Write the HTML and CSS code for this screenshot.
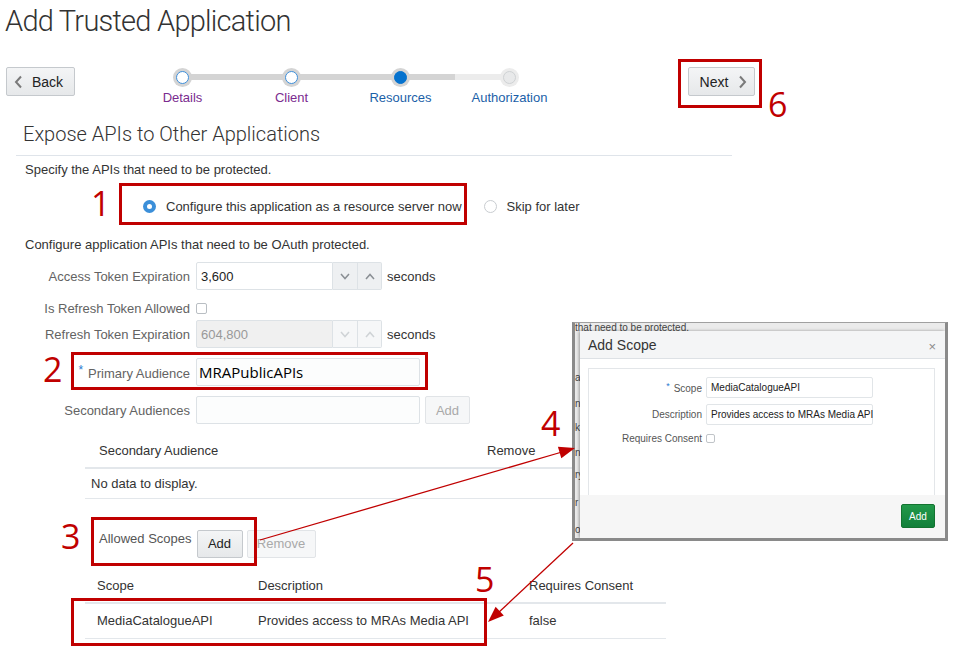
FILE: index.html
```html
<!DOCTYPE html>
<html>
<head>
<meta charset="utf-8">
<title>Add Trusted Application</title>
<link rel="stylesheet" href="styles.css">
</head>
<body>
<div class="page">
  <h1 class="title">Add Trusted Application</h1>

  <div class="topbar">
    <button class="btn back"><svg class="chev" width="9" height="14" viewBox="0 0 9 14"><polyline points="7,1.5 2,7 7,12.5" fill="none" stroke="#7a7a7a" stroke-width="2"/></svg>Back</button>
    <div class="train">
      <div class="step visited"><span class="dot"><span class="core"></span></span><span class="slabel">Details</span></div>
      <div class="step visited"><span class="dot"><span class="core"></span></span><span class="slabel">Client</span></div>
      <div class="step current"><span class="dot"><span class="core"></span></span><span class="slabel">Resources</span></div>
      <div class="step todo"><span class="dot"><span class="core"></span></span><span class="slabel">Authorization</span></div>
    </div>
    <button class="btn next">Next<svg class="chev" width="9" height="14" viewBox="0 0 9 14"><polyline points="2,1.5 7,7 2,12.5" fill="none" stroke="#7a7a7a" stroke-width="2"/></svg></button>
  </div>

  <div class="section">
    <h2 class="heading">Expose APIs to Other Applications</h2>
    <p class="intro">Specify the APIs that need to be protected.</p>
    <div class="radios">
      <span class="radio on"></span><span class="rtext">Configure this application as a resource server now</span>
      <span class="radio off"></span><span class="rtext">Skip for later</span>
    </div>
    <p class="intro second">Configure application APIs that need to be OAuth protected.</p>

    <div class="form">
      <div class="row">
        <span class="lbl">Access Token Expiration</span>
        <span class="input numin">3,600</span>
        <span class="spin"><svg width="10" height="7" viewBox="0 0 10 7"><polyline points="1,1 5,5.5 9,1" fill="none" stroke="#8a8f94" stroke-width="1.5"/></svg></span>
        <span class="spin up"><svg width="10" height="7" viewBox="0 0 10 7"><polyline points="1,6 5,1.5 9,6" fill="none" stroke="#8a8f94" stroke-width="1.5"/></svg></span>
        <span class="unit">seconds</span>
      </div>
      <div class="row check-row">
        <span class="lbl">Is Refresh Token Allowed</span>
        <span class="checkbox"></span>
      </div>
      <div class="row">
        <span class="lbl">Refresh Token Expiration</span>
        <span class="input numin disabled">604,800</span>
        <span class="spin disabled"><svg width="10" height="7" viewBox="0 0 10 7"><polyline points="1,1 5,5.5 9,1" fill="none" stroke="#cfd3d6" stroke-width="1.5"/></svg></span>
        <span class="spin up disabled"><svg width="10" height="7" viewBox="0 0 10 7"><polyline points="1,6 5,1.5 9,6" fill="none" stroke="#cfd3d6" stroke-width="1.5"/></svg></span>
        <span class="unit">seconds</span>
      </div>
      <div class="row">
        <span class="lbl"><span class="req">*</span>Primary Audience</span>
        <span class="input wide big">MRAPublicAPIs</span>
      </div>
      <div class="row">
        <span class="lbl">Secondary Audiences</span>
        <span class="input wide"></span>
        <button class="btn small disabled add2">Add</button>
      </div>
    </div>

    <table class="grid aud">
      <thead><tr><th class="c1">Secondary Audience</th><th>Remove</th></tr></thead>
      <tbody><tr><td colspan="2" class="empty">No data to display.</td></tr></tbody>
    </table>

    <div class="toolbar">
      <span class="tlabel">Allowed Scopes</span>
      <button class="btn small addbtn">Add</button>
      <button class="btn small disabled removebtn">Remove</button>
    </div>

    <table class="grid scopes">
      <thead><tr><th class="s1">Scope</th><th class="s2">Description</th><th>Requires Consent</th></tr></thead>
      <tbody><tr><td>MediaCatalogueAPI</td><td>Provides access to MRAs Media API</td><td>false</td></tr></tbody>
    </table>
  </div>

  <div class="inset">
    <span class="frag top">that need to be protected.</span>
    <span class="frag" style="top:50px">ati</span>
    <span class="frag" style="top:76px">n</span>
    <span class="frag" style="top:100px">ke</span>
    <span class="frag" style="top:125px">n</span>
    <span class="frag" style="top:147px">ry</span>
    <span class="frag" style="top:175px">r /</span>
    <span class="frag" style="top:202px">or</span>
    <div class="dialog">
      <div class="dhead"><span class="dtitle">Add Scope</span><span class="close">×</span></div>
      <div class="dbody">
        <div class="panel">
          <div class="drow"><span class="dlbl"><span class="req">*</span>Scope</span><span class="dinput">MediaCatalogueAPI</span></div>
          <div class="drow"><span class="dlbl">Description</span><span class="dinput">Provides access to MRAs Media API<span class="caret"></span></span></div>
          <div class="drow crow"><span class="dlbl">Requires Consent</span><span class="dcheck"></span></div>
        </div>
      </div>
      <div class="dfoot"><button class="gbtn">Add</button></div>
    </div>
  </div>

  <div class="anno box b1"></div>
  <div class="anno box b2"></div>
  <div class="anno box b3"></div>
  <div class="anno box b5"></div>
  <div class="anno box b6"></div>
  <span class="anno mark n1">1</span>
  <span class="anno mark n2">2</span>
  <span class="anno mark n3">3</span>
  <span class="anno mark n4">4</span>
  <span class="anno mark n5">5</span>
  <span class="anno mark n6">6</span>

  <svg class="arrows" width="964" height="664" viewBox="0 0 964 664">
    <line x1="260" y1="540" x2="562" y2="452" stroke="#c00000" stroke-width="1.3"/>
    <polygon points="575,448 561.3,458.3 557.9,446.7" fill="#c00000"/>
    <line x1="573" y1="543" x2="498" y2="613" stroke="#c00000" stroke-width="1.3"/>
    <polygon points="488,622 503.8,615.5 495.6,606.7" fill="#c00000"/>
  </svg>
</div>
</body>
</html>
```

FILE: styles.css
```css
* { box-sizing: border-box; }
body {
  margin: 0;
  background: #fff;
  font-family: "Liberation Sans", Arial, sans-serif;
  font-size: 13px;
  color: #333;
}
.page { position: relative; width: 964px; height: 664px; overflow: hidden; }

.title {
  margin: 0;
  padding: 4px 0 0 5px;
  font: 300 29px/34px Roboto, sans-serif;
  letter-spacing: -0.75px;
  color: #333;
}

/* buttons */
.btn {
  display: inline-flex;
  align-items: center;
  justify-content: center;
  height: 29px;
  margin: 0;
  border: 1px solid #c5c9cd;
  border-radius: 2px;
  background: linear-gradient(#f4f5f6, #e6e8ea);
  font: 14px "Liberation Sans", Arial, sans-serif;
  color: #222;
  padding: 0;
}
.btn .chev { display: block; }

.topbar {
  display: flex;
  align-items: flex-start;
  height: 38px;
  margin-top: 29px;
  padding-left: 6px;
}
.back { width: 69px; gap: 9px; padding-right: 4px; }
.next { width: 67px; gap: 10px; margin-left: 124px; padding-left: 4px; }

/* train */
.train {
  position: relative;
  display: flex;
  width: 436px;
  margin-left: 53px;
}
.train::before {
  content: "";
  position: absolute;
  left: 54px; top: 7px;
  width: 273px; height: 6px;
  background: #d4d4d4;
}
.train::after {
  content: "";
  position: absolute;
  left: 327px; top: 7px;
  width: 55px; height: 6px;
  background: #ececec;
}
.step {
  position: relative;
  z-index: 1;
  width: 109px;
  display: flex;
  flex-direction: column;
  align-items: center;
}
.dot {
  width: 19px; height: 19px;
  margin-top: 1px;
  border-radius: 50%;
  background: #d4d4d4;
  display: flex;
  align-items: center;
  justify-content: center;
}
.core {
  width: 13px; height: 13px;
  border-radius: 50%;
  background: #fff;
  border: 1.5px solid #3e8fda;
}
.current .core { background: #0572ce; border-color: #0572ce; }
.todo .dot { background: #ececec; }
.todo .core { background: #e8e9ea; border: 1px solid #cfd2d4; }
.slabel { margin-top: 3px; line-height: 16px; font-size: 13px; }
.visited .slabel { color: #7b2c8f; }
.current .slabel, .todo .slabel { color: #1b5fa8; }

/* section */
.section { margin-left: 16px; width: 716px; }
.heading {
  margin: 15px 0 0;
  padding: 0 0 7px 7px;
  font: 300 20px/28px Roboto, sans-serif;
  color: #333;
  border-bottom: 1px solid #dfe4ea;
}
.intro { margin: 6px 0 0 9px; line-height: 16px; color: #333; }
.intro.second { margin-top: 21px; }

.radios {
  display: flex;
  align-items: center;
  height: 20px;
  margin-top: 18px;
  padding-left: 127px;
}
.radio {
  width: 13px; height: 13px;
  border-radius: 50%;
  flex: none;
}
.radio.on {
  background: #3b8fd9;
  display: flex; align-items: center; justify-content: center;
}
.radio.on::after {
  content: "";
  width: 5px; height: 5px;
  border-radius: 50%;
  background: #fff;
}
.radio.off { border: 1px solid #c9cdd1; background: #fff; margin-left: 22px; }
.rtext { margin-left: 10px; color: #333; }

/* form */
.form { margin-top: 9px; display: flex; flex-direction: column; }
.row { display: flex; align-items: center; height: 28px; margin-top: 10px; }
.row:first-child { margin-top: 0; }
.row.check-row { height: 16px; }
.row.check-row + .row { margin-top: 4px; }
.lbl {
  width: 174px;
  margin-right: 6px;
  text-align: right;
  color: #636363;
  white-space: nowrap;
}
.req { color: #2a7ad0; font-size: 12px; vertical-align: 4px; margin-right: 5px; }
.input {
  height: 28px;
  border: 1px solid #dde2e6;
  border-radius: 2px;
  background: #fff;
  padding: 0 4px;
  display: flex;
  align-items: center;
  color: #222;
}
.input.numin { width: 137px; border-radius: 2px 0 0 2px; }
.input.disabled { background: #f0f0f0; color: #999; }
.input.wide { width: 224px; background: #fcfdfd; }
.input.big { font: 15px "Open Sans", "Noto Sans", sans-serif; color: #000; padding-left: 2px; }
.spin {
  width: 25px; height: 28px;
  border: 1px solid #dde2e6;
  border-left: none;
  background: #eef0f2;
  display: flex;
  align-items: center;
  justify-content: center;
}
.spin.up { width: 24px; border-radius: 0 2px 2px 0; }
.spin.disabled { background: #f6f7f8; }
.unit { margin-left: 5px; color: #333; }
.checkbox {
  width: 11px; height: 11px;
  border: 1px solid #b9bec3;
  border-radius: 2px;
  background: #fff;
}
.btn.small { height: 28px; font-size: 13px; }
.btn.disabled { background: #f6f7f8; border-color: #e1e4e7; color: #a9a9a9; }
.add2 { width: 45px; margin-left: 5px; }

/* tables */
.grid { border-collapse: collapse; margin-left: 69px; table-layout: fixed; }
.grid th {
  font-weight: normal;
  text-align: left;
  color: #333;
  height: 34px;
  padding: 0 0 0 12px;
  border-bottom: 2px solid #e3e7eb;
}
.grid td {
  padding: 0 0 0 12px;
  border-bottom: 1px solid #e3e7eb;
  color: #333;
}
.aud { width: 520px; margin-top: 10px; }
.aud th { padding-left: 14px; }
.aud .c1 { width: 388px; }
.aud td { height: 30px; }
.aud td.empty { padding-left: 6px; }

.toolbar { display: flex; align-items: flex-start; margin-top: 31px; padding-left: 83px; }
.tlabel { line-height: 16px; margin-top: 1px; margin-right: 5px; color: #555; }
.addbtn { width: 46px; }
.removebtn { width: 69px; margin-left: 4px; }

.scopes { width: 581px; margin-top: 11px; }
.scopes .s1 { width: 161px; }
.scopes .s2 { width: 271px; }
.scopes td { height: 36px; }

/* dialog inset (screenshot of the Add Scope dialog) */
.inset {
  position: absolute;
  left: 572px; top: 322px;
  width: 376px; height: 219px;
  background: #ebebeb;
  border: 3px solid #8a8a8a;
  border-top: 1px solid #a0a0a0;
  padding: 8px 0 0 5px;
  display: flex;
  overflow: hidden;
}
.frag {
  position: absolute;
  left: 0;
  font-size: 10px;
  line-height: 10px;
  color: #444;
  white-space: nowrap;
}
.frag.top { top: 0; left: 0; line-height: 9px; }
.dialog {
  position: relative;
  z-index: 1;
  flex: 1;
  display: flex;
  flex-direction: column;
  background: #fff;
  box-shadow: -1px 0 3px rgba(0,0,0,0.35);
}
.dhead {
  height: 28px;
  flex: none;
  display: flex;
  align-items: center;
  justify-content: space-between;
  padding: 0 9px 0 8px;
  background: #f4f5f6;
  border-bottom: 1px solid #dde1e5;
}
.dtitle { font: 14px "Liberation Sans", Arial, sans-serif; color: #333; }
.close { font-size: 13px; color: #8a8a8a; margin-top: 4px; }
.dbody { flex: 1; padding: 9px 10px 0 8px; display: flex; }
.panel {
  flex: 1;
  border: 1px solid #e3e6e9;
  border-bottom: none;
  padding-top: 8px;
}
.drow { display: flex; align-items: center; height: 21px; margin-bottom: 6px; }
.drow.crow { height: 14px; }
.dlbl {
  width: 113px;
  margin-right: 4px;
  text-align: right;
  font-size: 10px;
  color: #555;
  white-space: nowrap;
}
.dlbl .req { font-size: 9px; vertical-align: 3px; margin-right: 4px; }
.dinput {
  width: 167px; height: 21px;
  border: 1px solid #e1e5e8;
  border-radius: 2px;
  padding: 0 4px;
  display: flex; align-items: center;
  font-size: 10px;
  color: #222;
  white-space: nowrap;
}
.caret { display: inline-block; width: 1px; height: 12px; background: #222; margin-left: 1px; }
.dcheck { width: 9px; height: 9px; border: 1px solid #c0c4c8; border-radius: 2px; }
.dfoot {
  height: 43px;
  flex: none;
  background: #f6f6f6;
  display: flex;
  justify-content: flex-end;
  padding: 9px 10px 0 0;
}
.gbtn {
  width: 34px; height: 24px;
  margin: 0; padding: 0;
  border: 1px solid #137330;
  border-radius: 2px;
  background: linear-gradient(#22994a, #12803a);
  color: #fff;
  font: 10px "Liberation Sans", Arial, sans-serif;
}

/* annotations */
.anno { position: absolute; z-index: 5; }
.box { border: 3px solid #c00000; }
.b1 { left: 119px; top: 183px; width: 348px; height: 42px; }
.b2 { left: 71px; top: 352px; width: 357px; height: 38px; }
.b3 { left: 91px; top: 517px; width: 166px; height: 49px; }
.b5 { left: 71px; top: 598px; width: 416px; height: 48px; }
.b6 { left: 678px; top: 59px; width: 84px; height: 49px; }
.mark {
  font: 34px/34px "Open Sans", "Noto Sans", sans-serif;
  color: #c00000;
}
.n1 { left: 91px; top: 186px; }
.n2 { left: 43px; top: 352px; }
.n3 { left: 61px; top: 519px; }
.n4 { left: 541px; top: 406px; }
.n5 { left: 475px; top: 562px; }
.n6 { left: 768px; top: 87px; }
.arrows { position: absolute; left: 0; top: 0; z-index: 6; pointer-events: none; }
```
